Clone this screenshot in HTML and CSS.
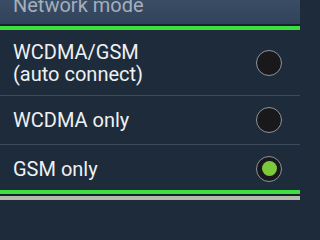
FILE: index.html
```html
<!DOCTYPE html>
<html>
<head>
<meta charset="utf-8">
<link rel="stylesheet" href="styles.css">
</head>
<body>
<div class="screen">
  <div class="header"><div class="title">Network mode</div></div>
  <div class="accent"></div>
  <div class="list">
    <div class="item item-tall">
      <div class="label">WCDMA/GSM<br>(auto connect)</div>
      <div class="radio"></div>
    </div>
    <div class="sep"></div>
    <div class="item item-mid">
      <div class="label">WCDMA only</div>
      <div class="radio"></div>
    </div>
    <div class="sep"></div>
    <div class="item item-last">
      <div class="label">GSM only</div>
      <div class="radio checked"><div class="dot"></div></div>
    </div>
  </div>
  <div class="accent accent-bottom"></div>
  <div class="below"></div>
</div>
</body>
</html>
```
FILE: styles.css
```css
html, body {
  margin: 0;
  padding: 0;
  background: #1e2b3a;
}
.screen {
  width: 300px;
  height: 200px;
  overflow: hidden;
  display: flex;
  flex-direction: column;
  font-family: Roboto, "Liberation Sans", sans-serif;
}
.header {
  height: 24px;
  flex: none;
  background: linear-gradient(#3a4d64, #31435a);
  border-bottom: 2px solid #18222e;
  overflow: hidden;
}
.title {
  margin-top: -6px;
  padding-left: 13px;
  font-size: 20px;
  line-height: 22px;
  color: #a3afbf;
}
.accent {
  height: 4px;
  flex: none;
  background: #3ee040;
}
.list {
  display: flex;
  flex-direction: column;
  background: #1e2b3a;
}
.item {
  display: flex;
  align-items: center;
  justify-content: space-between;
  padding: 0 18px 0 13px;
}
.item-tall { height: 65px; }
.item-mid { height: 48px; }
.item-last { height: 43px; padding-top: 2px; box-sizing: content-box; }
.label {
  font-size: 20px;
  line-height: 22px;
  color: #eef1f4;
}
.sep {
  height: 1px;
  background: #3b4b5c;
}
.radio {
  width: 24px;
  height: 24px;
  border-radius: 50%;
  border: 1px solid #8d949c;
  background: #19191c;
  display: flex;
  align-items: center;
  justify-content: center;
  flex: none;
}
.dot {
  width: 15px;
  height: 15px;
  border-radius: 50%;
  background: #7cc93c;
}
.accent-bottom {
  border-bottom: 2px solid #18222e;
}
.below {
  flex: 1;
  background: #b3bbad;
}
```
